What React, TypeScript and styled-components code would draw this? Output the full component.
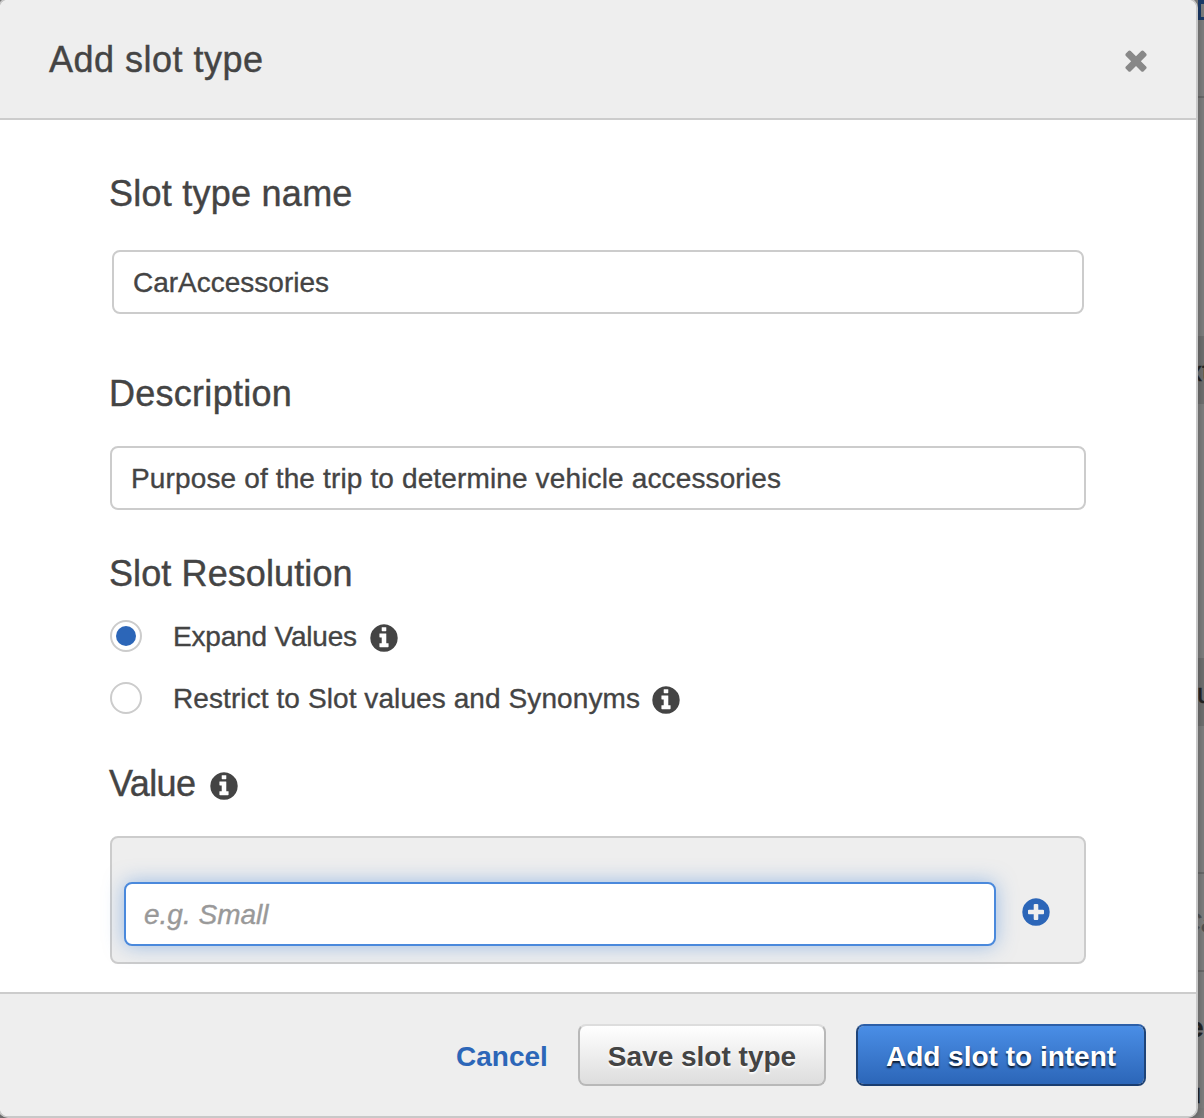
import React, { useState } from "react";
import styled, { createGlobalStyle, css } from "styled-components";

const GlobalStyle = createGlobalStyle`
  *, *::before, *::after { box-sizing: border-box; }
  body {
    margin: 0;
    overflow: hidden;
    font-family: "Helvetica Neue", "Liberation Sans", Arial, sans-serif;
    color: #444;
  }
`;

const Screen = styled.div`
  position: relative;
  width: 1204px;
  height: 1118px;
  overflow: hidden;
  background: #7c7c7c;
`;

const Page = styled.div`
  display: flex;
  flex-direction: column;
  width: 100px;
  height: 1118px;
  margin-left: 1104px;
`;

const Strip = styled.div<{ $h: number; $band?: boolean; $rule?: boolean; $drop?: number }>`
  display: flex;
  flex: none;
  align-items: center;
  height: ${(p) => p.$h}px;
  padding-top: ${(p) => p.$drop ?? 0}px;
  padding-left: 94px;
  background: ${(p) => (p.$band ? "#707070" : "#7f7f7f")};
  border-bottom: ${(p) => (p.$rule ? "2px solid #6a6a6a" : "0")};
`;

const PageButton = styled.div`
  flex: none;
  align-self: flex-start;
  width: 40px;
  height: 20px;
  border: 3px solid #1b3a68;
  border-top-width: 4px;
`;

const Glyph = styled.span<{ $shift: number; $italic?: boolean; $bold?: boolean }>`
  flex: none;
  margin-left: ${(p) => p.$shift}px;
  font-size: 28px;
  line-height: 28px;
  color: ${(p) => (p.$italic ? "#505050" : "#242424")};
  font-style: ${(p) => (p.$italic ? "italic" : "normal")};
  font-weight: ${(p) => (p.$bold ? 700 : 400)};
  -webkit-text-stroke: 0.4px currentColor;
`;

const Dialog = styled.section`
  position: absolute;
  top: -2px;
  left: -2px;
  display: flex;
  flex-direction: column;
  width: 1200px;
  height: 1120px;
  border: 2px solid #c8c8c8;
  border-radius: 10px;
  background: #fff;
  overflow: hidden;
`;

const Shade = styled.div`
  position: absolute;
  top: 0;
  left: -2px;
  width: 1200px;
  height: 1118px;
  border-radius: 10px;
  box-shadow: 0 2px 10px rgba(0, 0, 0, 0.3);
`;

const Header = styled.header`
  display: flex;
  flex: none;
  align-items: center;
  justify-content: space-between;
  height: 120px;
  padding: 2px 44px 0 49px;
  background: #eee;
  border-bottom: 2px solid #ccc;
`;

const Heading = styled.h2<{ $track: number }>`
  margin: 0;
  font-size: 36px;
  font-weight: 400;
  line-height: 36px;
  white-space: nowrap;
  letter-spacing: ${(p) => p.$track}px;
  -webkit-text-stroke: 0.4px currentColor;
`;

const FieldHeading = styled(Heading)`
  margin-left: -1px;
`;

const CloseButton = styled.button`
  display: flex;
  margin: 0;
  padding: 0;
  border: 0;
  background: none;
  color: #888;
`;

const Body = styled.main`
  display: flex;
  flex: none;
  flex-direction: column;
  height: 872px;
  padding: 56px 110px 0;
`;

const inputText = css<{ $track: number }>`
  font-family: inherit;
  font-size: 28px;
  color: #444;
  letter-spacing: ${(p) => p.$track}px;
  -webkit-text-stroke: 0.35px currentColor;
`;

const Input = styled.input<{ $track: number; $inset?: number }>`
  ${inputText}
  flex: none;
  height: 64px;
  margin: 0 ${(p) => p.$inset ?? 0}px;
  padding: 2px 19px 0;
  border: 2px solid #ccc;
  border-radius: 8px;
  background: #fff;
  outline: none;
`;

const ValueInput = styled(Input)`
  width: 872px;
  margin: 0;
  padding: 2px 18px 0;
  border-color: #4a89dc;
  box-shadow: 0 0 20px rgba(74, 137, 220, 0.5);
  &::placeholder { color: #999; font-style: italic; opacity: 1; }
`;

const Field = styled.div<{ $gap: number; $after: number }>`
  display: flex;
  flex: none;
  flex-direction: column;
  gap: ${(p) => p.$gap}px;
  margin-bottom: ${(p) => p.$after}px;
`;

const Options = styled.div`
  display: flex;
  flex-direction: column;
  gap: 30px;
`;

const Option = styled.label`
  display: flex;
  align-items: center;
  height: 32px;
`;

const Radio = styled.input`
  appearance: none;
  display: grid;
  place-items: center;
  width: 32px;
  height: 32px;
  margin: 0 31px 0 0;
  border: 2px solid #ccc;
  border-radius: 50%;
  background: #fff;
  &:checked::before {
    content: "";
    width: 20px;
    height: 20px;
    border-radius: 50%;
    background: #2c66b8;
  }
`;

const OptionText = styled.span<{ $track: number; $w: number }>`
  ${inputText}
  width: ${(p) => p.$w}px;
  padding-top: 2px;
  line-height: 32px;
  white-space: nowrap;
`;

const InfoSlot = styled.span`
  display: flex;
  margin-top: 4px;
`;

const ValueTitle = styled.div`
  display: flex;
  align-items: center;
  height: 36px;
`;

const TitleCell = styled.div`
  width: 98px;
`;

const ValuePanel = styled.div`
  display: flex;
  flex: none;
  align-items: flex-end;
  gap: 24px;
  height: 128px;
  padding: 0 12px 16px;
  border: 2px solid #ccc;
  border-radius: 8px;
  background: #eee;
`;

const AddButton = styled.button`
  display: flex;
  margin: 0 0 18px;
  padding: 0;
  border: 0;
  background: none;
  color: #2c66b8;
`;

const Footer = styled.footer`
  display: flex;
  flex: 1;
  align-items: flex-start;
  justify-content: flex-end;
  gap: 30px;
  padding: 30px 50px 0 0;
  background: #eee;
  border-top: 2px solid #ccc;
`;

const Button = styled.button<{ $kind: "link" | "plain" | "primary"; $track: number; $w: number }>`
  flex: none;
  width: ${(p) => p.$w}px;
  height: 62px;
  padding: 3px 0 0;
  border: 2px solid transparent;
  border-radius: 8px;
  font-family: inherit;
  font-size: 28px;
  font-weight: 700;
  line-height: 55px;
  white-space: nowrap;
  letter-spacing: ${(p) => p.$track}px;
  ${(p) => p.$kind === "link" && css`
    border-width: 2px 0;
    background: none;
    color: #2c66b8;
  `}
  ${(p) => p.$kind === "plain" && css`
    border-color: #ddd #b8b8b8 #b8b8b8;
    background: linear-gradient(#fff, #ddd) padding-box;
    color: #444;
    text-shadow: 0 2px 2px #fff;
  `}
  ${(p) => p.$kind === "primary" && css`
    border-color: #2c5fa8 #1f4478 #1a3d70;
    background: linear-gradient(#4a8ee6, #2c66b8) padding-box;
    color: #fff;
    text-shadow: 0 2px 2px rgba(0, 0, 0, 0.8);
  `}
`;

const DISC =
  "M1664 896q0 209-103 385.5t-279.5 279.5-385.5 103-385.5-103-279.5-279.5-103-385.5 103-385.5 279.5-279.5 385.5-103 385.5 103 279.5 279.5 103 385.5z";

const ICONS = {
  info:
    "M1152 1376v-160q0-14-9-23t-23-9h-96v-512q0-14-9-23t-23-9h-320q-14 0-23 9t-9 23v160q0 14 9 23t23 9h96v320h-96q-14 0-23 9t-9 23v160q0 14 9 23t23 9h448q14 0 23-9t9-23zM1024 480v-160q0-14-9-23t-23-9h-192q-14 0-23 9t-9 23v160q0 14 9 23t23 9h192q14 0 23-9t9-23z" +
    DISC,
  plus:
    "M1344 960v-128q0-26-19-45t-45-19h-256v-256q0-26-19-45t-45-19h-128q-26 0-45 19t-19 45v256h-256q-26 0-45 19t-19 45v128q0 26 19 45t45 19h256v256q0 26 19 45t45 19h128q26 0 45-19t19-45v-256h256q26 0 45-19t19-45z" +
    DISC,
  times:
    "M1490 1322q0 40-28 68l-136 136q-28 28-68 28t-68-28l-294-294-294 294q-28 28-68 28t-68-28l-136-136q-28-28-28-68t28-68l294-294-294-294q-28-28-28-68t28-68l136-136q28-28 68-28t68 28l294 294 294-294q28-28 68-28t68 28l136 136q28 28 28 68t-28 68l-294 294 294 294q28 28 28 68z",
};

function Icon({ name }: { name: keyof typeof ICONS }) {
  return (
    <svg width="32" height="32" viewBox="0 0 1792 1792" fill="currentColor" fillRule="evenodd" aria-hidden="true">
      <path d={ICONS[name]} />
    </svg>
  );
}

const OPTIONS = [
  { id: "expand", label: "Expand Values", track: -0.18, width: 195 },
  { id: "restrict", label: "Restrict to Slot values and Synonyms", track: 0.09, width: 477 },
];

export default function App() {
  const [mode, setMode] = useState("expand");
  return (
    <Screen>
      <GlobalStyle />
      <Page>
        <Strip $h={98} $rule><PageButton /></Strip>
        <Strip $h={238} />
        <Strip $h={68} $band $drop={3}><Glyph $shift={-10}>xt</Glyph></Strip>
        <Strip $h={254} />
        <Strip $h={68} $band $drop={4}><Glyph $shift={-1}>u</Glyph></Strip>
        <Strip $h={148} $rule />
        <Strip $h={98} $rule $drop={2}><Glyph $shift={-17} $italic>Ca</Glyph></Strip>
        <Strip $h={108} $drop={3}><Glyph $shift={-10} $bold>e</Glyph></Strip>
        <Strip $h={28}><Glyph $shift={-14} $bold>u</Glyph></Strip>
      </Page>
      <Shade />
      <Dialog>
        <Header>
          <Heading $track={0.5}>Add slot type</Heading>
          <CloseButton aria-label="Close"><Icon name="times" /></CloseButton>
        </Header>
        <Body>
          <Field $gap={38} $after={62}>
            <FieldHeading as="label" $track={0.25}>Slot type name</FieldHeading>
            <Input $track={0} $inset={2} defaultValue="CarAccessories" />
          </Field>
          <Field $gap={34} $after={46}>
            <FieldHeading as="label" $track={0.27}>Description</FieldHeading>
            <Input $track={0.14} defaultValue="Purpose of the trip to determine vehicle accessories" />
          </Field>
          <Field $gap={28} $after={52}>
            <FieldHeading $track={0.1}>Slot Resolution</FieldHeading>
            <Options>
              {OPTIONS.map((o) => (
                <Option key={o.id}>
                  <Radio type="radio" name="resolution" checked={mode === o.id} onChange={() => setMode(o.id)} />
                  <OptionText $track={o.track} $w={o.width}>{o.label}</OptionText>
                  <InfoSlot><Icon name="info" /></InfoSlot>
                </Option>
              ))}
            </Options>
          </Field>
          <Field $gap={34} $after={0}>
            <ValueTitle>
              <TitleCell><FieldHeading $track={-0.6}>Value</FieldHeading></TitleCell>
              <InfoSlot><Icon name="info" /></InfoSlot>
            </ValueTitle>
            <ValuePanel>
              <ValueInput $track={0} placeholder="e.g. Small" />
              <AddButton aria-label="Add value"><Icon name="plus" /></AddButton>
            </ValuePanel>
          </Field>
        </Body>
        <Footer>
          <Button $kind="link" $track={0} $w={92}>Cancel</Button>
          <Button $kind="plain" $track={0} $w={248}>Save slot type</Button>
          <Button $kind="primary" $track={0} $w={290}>Add slot to intent</Button>
        </Footer>
      </Dialog>
    </Screen>
  );
}
